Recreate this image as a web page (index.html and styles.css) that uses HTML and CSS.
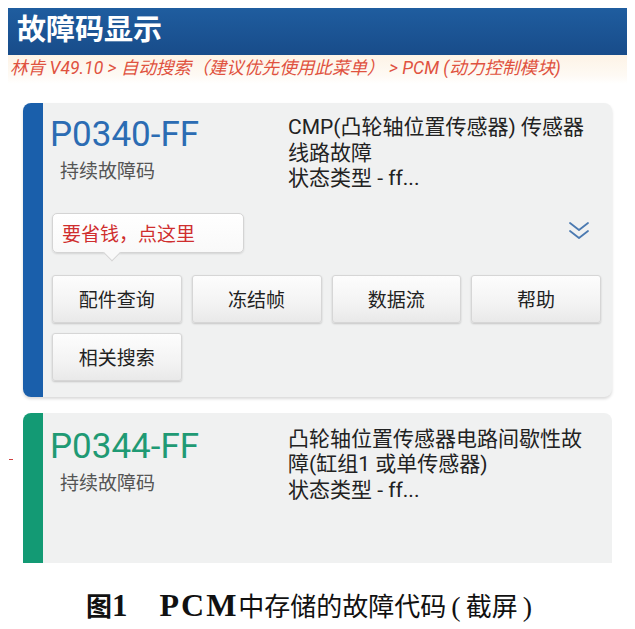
FILE: index.html
```html
<!DOCTYPE html>
<html lang="zh">
<head>
<meta charset="utf-8">
<link rel="stylesheet" href="styles.css">
</head>
<body>
<div class="page">
  <header class="appbar"><h1 class="title">故障码显示</h1></header>
  <div class="crumbs">林肯 V49.10 &gt; 自动搜索（建议优先使用此菜单） &gt; PCM (动力控制模块)</div>

  <section class="card card-blue">
    <div class="card-top">
      <div class="code-col">
        <div class="code code-blue">P0340-FF</div>
        <div class="status">持续故障码</div>
      </div>
      <div class="desc">CMP(凸轮轴位置传感器) 传感器<br>线路故障<br>状态类型 - ff...</div>
    </div>
    <div class="tip-row">
      <div class="tip">要省钱，点这里</div>
      <svg class="chev" width="22" height="22" viewBox="0 0 22 22" fill="none" stroke="#4b7ab1" stroke-width="1.8" stroke-linecap="round" stroke-linejoin="round">
        <path d="M2 3 L11 10 L20 3"/>
        <path d="M2 11 L11 18 L20 11"/>
      </svg>
    </div>
    <div class="btns">
      <button class="btn">配件查询</button>
      <button class="btn">冻结帧</button>
      <button class="btn">数据流</button>
      <button class="btn">帮助</button>
      <button class="btn">相关搜索</button>
    </div>
  </section>

  <section class="card card-green">
    <div class="card-top">
      <div class="code-col">
        <div class="code code-green">P0344-FF</div>
        <div class="status">持续故障码</div>
      </div>
      <div class="desc">凸轮轴位置传感器电路间歇性故<br>障(缸组1 或单传感器)<br>状态类型 - ff...</div>
    </div>
  </section>

  <p class="caption"><b class="fig">图<span class="num">1</span></b><b class="pcm">PCM</b>中存储的故障代码<span class="paren">(</span>截屏<span class="paren">)</span></p>
  <span class="mark"></span>
</div>
</body>
</html>
```

FILE: styles.css
```css
html, body {
  margin: 0;
  padding: 0;
  background: #ffffff;
}
.page {
  position: relative;
  width: 635px;
  height: 629px;
  overflow: hidden;
  font-family: Roboto, "Noto Sans CJK SC", sans-serif;
}
.appbar {
  margin: 8px 8px 0 8px;
  height: 47px;
  background: linear-gradient(#1f5d9f, #184c8a);
  display: flex;
  align-items: center;
  padding-left: 9px;
}
.title {
  margin: -8px 0 0 0;
  color: #ffffff;
  font-size: 29px;
  font-weight: 700;
  line-height: 1;
  font-family: "Noto Sans CJK SC", sans-serif;
}
.crumbs {
  margin: 0 8px;
  height: 29px;
  line-height: 27px;
  padding-left: 2px;
  background: linear-gradient(#fdf3e6, #fefaf4 70%, #ffffff);
  color: #e0523f;
  font-style: italic;
  font-size: 17.6px;
  white-space: nowrap;
}
.card {
  margin-left: 23px;
  width: 589px;
  box-sizing: border-box;
  background: #f0f1f1;
  border-radius: 8px;
  box-shadow: 0 2px 3px rgba(0,0,0,0.15);
}
.card-blue {
  margin-top: 19px;
  border-left: 20px solid #1a5fab;
  padding: 12px 11px 16px 7px;
}
.card-green {
  margin-top: 16px;
  height: 150px;
  border-left: 20px solid #139a74;
  border-radius: 8px 8px 0 0;
  padding: 14px 11px 0 7px;
  box-shadow: none;
}
.card-top {
  display: flex;
}
.code-col {
  width: 238px;
  flex: none;
}
.code {
  font-size: 35px;
  line-height: 40px;
}
.code-blue { color: #2b6cb3; }
.code-green { color: #1f9a74; }
.status {
  margin-left: 10px;
  margin-top: 4px;
  color: #555555;
  font-size: 19px;
  line-height: 26px;
}
.desc {
  color: #222222;
  font-size: 21px;
  line-height: 25.5px;
  white-space: nowrap;
}
.tip-row {
  display: flex;
  align-items: center;
  justify-content: space-between;
  margin-top: 21px;
  padding-left: 2px;
}
.tip {
  position: relative;
  width: 192px;
  height: 40px;
  box-sizing: border-box;
  background: linear-gradient(#ffffff, #f9f9f9);
  border: 1px solid #d4d4d4;
  border-radius: 5px;
  box-shadow: 0 1px 2px rgba(0,0,0,0.12);
  color: #cf2e2e;
  font-size: 19px;
  line-height: 38px;
  padding-left: 9px;
  font-family: "Noto Sans CJK SC", sans-serif;
}
.tip::after {
  content: "";
  position: absolute;
  left: 53px;
  bottom: -7px;
  width: 11px;
  height: 11px;
  background: #f9f9f9;
  border-right: 1px solid #d4d4d4;
  border-bottom: 1px solid #d4d4d4;
  transform: rotate(45deg);
}
.chev {
  margin-right: 11px;
  margin-top: -4px;
}
.btns {
  display: grid;
  grid-template-columns: repeat(4, 1fr);
  gap: 10px 10px;
  margin-top: 22px;
  padding-left: 2px;
}
.btn {
  height: 48px;
  margin: 0;
  padding: 0;
  background: linear-gradient(#fdfdfd, #f3f3f3 60%, #e9e9e9);
  border: 1px solid #d6d6d6;
  border-radius: 3px;
  box-shadow: 0 1px 2px rgba(0,0,0,0.18);
  color: #222222;
  font-size: 19px;
  font-family: "Noto Sans CJK SC", sans-serif;
}
.caption {
  margin: 25px 0 0 0;
  text-align: center;
  font-family: "Noto Sans CJK SC", serif;
  font-size: 26px;
  line-height: 34px;
  color: #111111;
  padding-right: 12px;
  white-space: nowrap;
}
.caption .fig {
  font-weight: 700;
}
.caption .num {
  font-family: "Liberation Serif", serif;
  font-size: 31px;
}
.caption .pcm {
  font-family: "Liberation Serif", serif;
  font-weight: 700;
  font-size: 32px;
  letter-spacing: 2px;
  margin-left: 32px;
}
.caption .paren {
  font-family: "Liberation Serif", serif;
  font-size: 28px;
  margin: 0 5px;
}
.mark {
  position: absolute;
  left: 9px;
  top: 459px;
  width: 4px;
  height: 1px;
  background: #d04040;
}
```
